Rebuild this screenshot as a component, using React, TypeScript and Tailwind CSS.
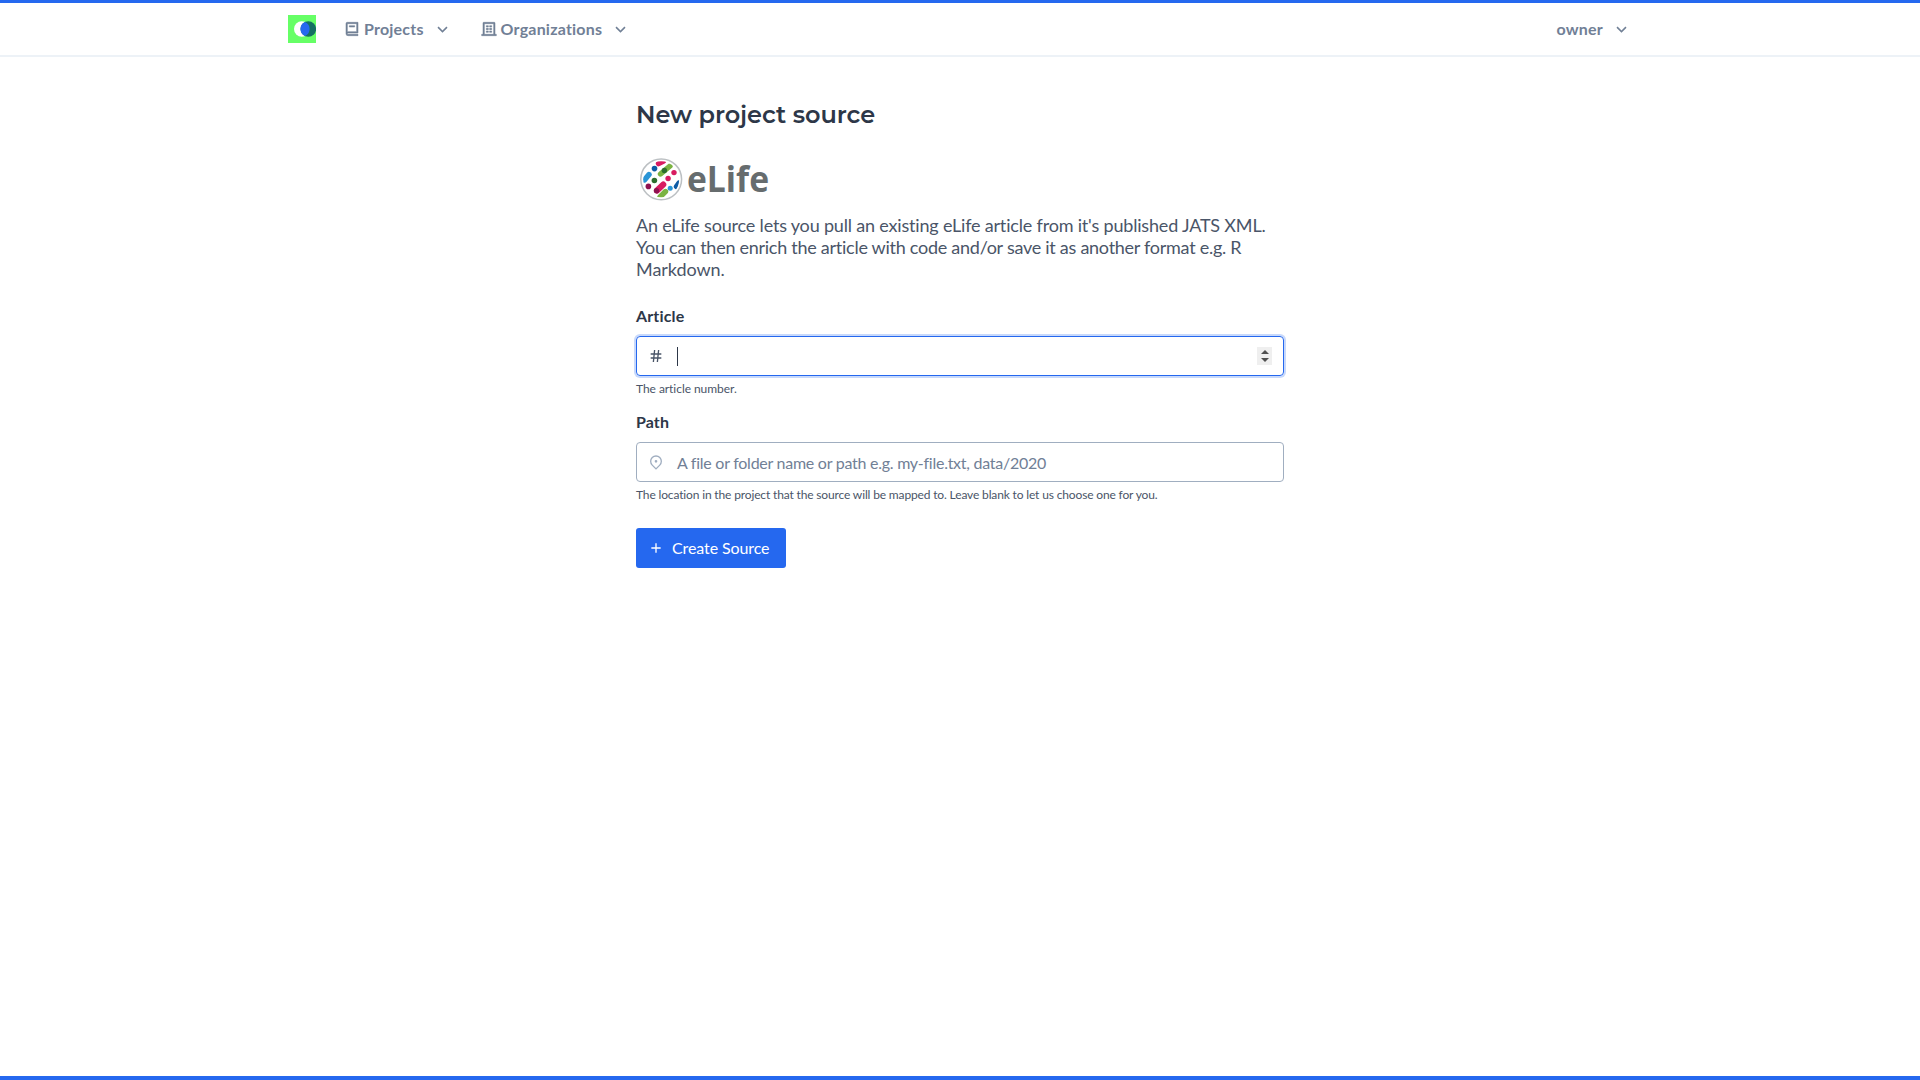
import type { ReactNode } from "react";

const icons = {
  book: "M21 18H6a1 1 0 0 0 0 2h15v2H6a3 3 0 0 1-3-3V4a2 2 0 0 1 2-2h16v16zM5 16.05c.162-.033.329-.05.5-.05H19V4H5v12.05zM16 9H8V7h8v2z",
  building:
    "M21 20h2v2H1v-2h2V3a1 1 0 0 1 1-1h16a1 1 0 0 1 1 1v17zm-2 0V4H5v16h14zM8 11h3v2H8v-2zm0-4h3v2H8V7zm0 8h3v2H8v-2zm5 0h3v2h-3v-2zm0-4h3v2h-3v-2zm0-4h3v2h-3V7z",
  down: "M12 13.172l4.95-4.95 1.414 1.414L12 16 5.636 9.636 7.05 8.222z",
  hash: "M7.784 14l.42-4H4V8h4.415l.525-5h2.011l-.525 5h3.989l.525-5h2.011l-.525 5H20v2h-3.784l-.42 4H20v2h-4.415l-.525 5h-2.011l.525-5H9.585l-.525 5H7.049l.525-5H4v-2h3.784zm2.011 0h3.99l.42-4h-3.99l-.42 4z",
  pin: "M12 20.9l4.95-4.95a7 7 0 1 0-9.9 0L12 20.9zm0 2.828l-6.364-6.364a9 9 0 1 1 12.728 0L12 23.728zM12 13a2 2 0 1 1 0-4 2 2 0 0 1 0 4z",
  add: "M11 11V5h2v6h6v2h-6v6h-2v-6H5v-2z",
};

function Icon({ name, className }: { name: keyof typeof icons; className: string }) {
  return (
    <svg viewBox="0 0 24 24" fill="currentColor" className={`shrink-0 ${className}`}>
      <path d={icons[name]} />
    </svg>
  );
}

function NavItem({ icon, children }: { icon?: "book" | "building"; children: ReactNode }) {
  return (
    <div className="flex items-center">
      {icon && <Icon name={icon} className="mr-1 size-4 stroke-current stroke-[0.8]" />}
      <span className="tracking-[0.2px]">{children}</span>
      <Icon name="down" className="ml-[9px] size-[19px]" />
    </div>
  );
}

function ElifeLogo() {
  return (
    <div className="flex h-12 items-start">
      <svg viewBox="0 0 50 48" className="block h-12 w-[50px]">
        <defs>
          <clipPath id="disc">
            <circle cx="25.2" cy="24.3" r="18" />
          </clipPath>
        </defs>
        <circle cx="25.2" cy="24.3" r="20.4" fill="#fff" stroke="#bcc0c3" strokeWidth="1.5" />
        <g clipPath="url(#disc)" strokeLinecap="round" strokeWidth="5.4" fill="none">
          <path d="M22.5 8.6L27.5 6" stroke="#d81b60" />
          <path d="M8.5 25L13 19.5" stroke="#2a95d6" />
          <path d="M24.5 19L34 11" stroke="#7ab342" />
          <path d="M21 35.5L27.3 29.5" stroke="#d81b60" strokeWidth="6" />
          <path d="M24 42L29.5 36.5" stroke="#7ab342" />
          <path d="M40.5 31.5L43 28" stroke="#0d5ba5" />
        </g>
        <circle cx="28.4" cy="15.5" r="2.7" fill="#2d6e2f" />
        <circle cx="18.5" cy="13.6" r="2.8" fill="#0d5ba5" />
        <circle cx="38" cy="17.6" r="2.7" fill="#d81b60" />
        <circle cx="18.4" cy="25.5" r="2.8" fill="#2d6e2f" />
        <circle cx="32.1" cy="23.5" r="2.7" fill="#d81b60" />
        <circle cx="12.4" cy="31.4" r="2.8" fill="#8e1250" />
        <circle cx="20.5" cy="35.8" r="2.7" fill="#8e1250" />
        <circle cx="34.2" cy="33.2" r="2.5" fill="#2a95d6" />
      </svg>
      <svg viewBox="0 0 90 48" className="block h-12 w-[90px] overflow-visible">
        <text
          x="1"
          y="37"
          fill="#666c6e"
          fontFamily="Open Sans, sans-serif"
          fontWeight="700"
          fontSize="36"
          textLength="82"
          lengthAdjust="spacingAndGlyphs"
        >
          eLife
        </text>
      </svg>
    </div>
  );
}

export default function App() {
  return (
    <div className="flex h-screen flex-col border-t-[3px] border-b-4 border-[#2568ef] bg-white font-['Lato',sans-serif] text-base text-[#4a5568]">
      <header className="h-[54px] shrink-0 border-b-2 border-[#edf2f7]">
        <div className="mx-auto flex h-[52px] w-[1344px] items-center font-bold text-[#718096]">
          <svg viewBox="0 0 28 28" className="mr-[28px] size-7">
            <rect width="28" height="28" fill="#66ff66" />
            <circle cx="13.8" cy="14" r="7.8" fill="#fff" />
            <circle cx="20.3" cy="14" r="7.8" fill="#147062" />
            <path d="M17.05 6.9a7.8 7.8 0 0 1 0 14.2a7.8 7.8 0 0 1 0-14.2z" fill="#2568ef" />
          </svg>
          <NavItem icon="book">Projects</NavItem>
          <div className="ml-[29px]">
            <NavItem icon="building">Organizations</NavItem>
          </div>
          <div className="mr-px ml-auto">
            <NavItem>owner</NavItem>
          </div>
        </div>
      </header>

      <main className="mx-auto w-[648px] pt-[43px]">
        <h1 className="font-['Montserrat','Inter',sans-serif] text-2xl leading-[30px] font-semibold tracking-[-0.06px] whitespace-nowrap text-[#2d3748]">
          New project source
        </h1>
        <div className="mt-[25px]">
          <ElifeLogo />
        </div>
        <p className="mt-[11px] text-lg leading-[22px]">
          <span className="block tracking-[-0.182px] whitespace-nowrap">
            An eLife source lets you pull an existing eLife article from it's published JATS XML.
          </span>
          <span className="block tracking-[-0.265px] whitespace-nowrap">
            You can then enrich the article with code and/or save it as another format e.g. R
          </span>
          <span className="block tracking-[-0.05px]">Markdown.</span>
        </p>

        <label className="mt-[24px] block leading-6 font-bold tracking-[0.15px] text-[#2d3748]">Article</label>
        <div className="mt-2 flex h-10 items-center rounded border border-[#2568ef] px-[11px] shadow-[0_0_0_2px_rgba(37,104,239,0.25)]">
          <Icon name="hash" className="size-4" />
          <span className="ml-[13px] h-[19px] w-px bg-[#2d3748]" />
          <span className="ml-auto flex h-[18px] w-[15px] flex-col items-center justify-center gap-1 bg-[#efefef] text-[#505050]">
            <svg viewBox="0 0 8 4" className="h-1 w-2" fill="currentColor">
              <path d="M0 4L4 0L8 4z" />
            </svg>
            <svg viewBox="0 0 8 4" className="h-1 w-2" fill="currentColor">
              <path d="M0 0L4 4L8 0z" />
            </svg>
          </span>
        </div>
        <p className="mt-1 text-xs leading-[18px] tracking-[-0.05px]">The article number.</p>

        <label className="mt-[12px] block leading-6 font-bold tracking-[0.1px] text-[#2d3748]">Path</label>
        <div className="mt-2 flex h-10 items-center rounded border border-[#a0aec0] pl-[11px] text-[#718096]">
          <Icon name="pin" className="size-4 text-[#a0aec0]" />
          <span className="mt-px ml-[13px] tracking-[-0.26px]">
            A file or folder name or path e.g. my-file.txt, data/2020
          </span>
        </div>
        <p className="mt-1 text-xs leading-[18px] tracking-[-0.148px]">
          The location in the project that the source will be mapped to. Leave blank to let us choose one for you.
        </p>

        <button className="mt-6 flex h-10 w-[150px] items-center rounded-[3px] bg-[#2568ef] pl-3 text-white">
          <Icon name="add" className="size-4" />
          <span className="ml-2 tracking-[-0.1px]">Create Source</span>
        </button>
      </main>
    </div>
  );
}
